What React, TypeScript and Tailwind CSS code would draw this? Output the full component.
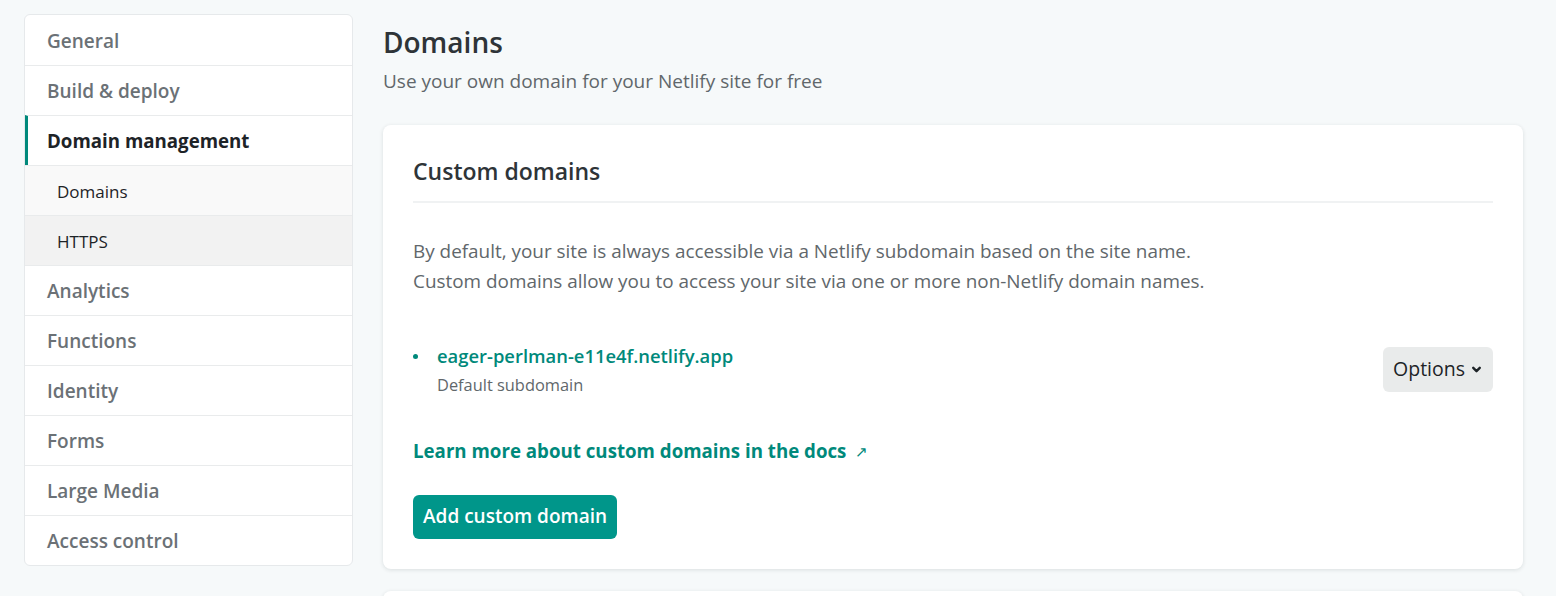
import { ChevronDown } from "lucide-react";

const navItems = [
  { label: "General" },
  { label: "Build & deploy" },
  { label: "Domain management", active: true },
  { label: "Domains", sub: true },
  { label: "HTTPS", sub: true, hover: true },
  { label: "Analytics" },
  { label: "Functions" },
  { label: "Identity" },
  { label: "Forms" },
  { label: "Large Media" },
  { label: "Access control" },
];

function Sidebar() {
  return (
    <nav className="w-[329px] shrink-0 self-start bg-white border border-[#e6e9eb] rounded-md overflow-hidden">
      {navItems.map((item, idx) => (
        <div
          key={item.label}
          className={[
            "h-[50px] flex items-center pt-[2px]",
            idx > 0 ? "border-t border-[#e9ebec]" : "",
            item.sub
              ? item.hover
                ? "bg-[#f2f2f2] pl-[32px] text-[17px] text-[#1d2327]"
                : "bg-[#f9f9f9] pl-[32px] text-[17px] text-[#1d2327]"
              : item.active
              ? "border-l-[3px] border-l-[#00897b] pl-[19px] text-[18.7px] font-bold text-[#1d2327]"
              : "pl-[22px] text-[19px] font-semibold text-[#6b7176]",
          ].join(" ")}
        >
          {item.label}
        </div>
      ))}
    </nav>
  );
}

function CustomDomains() {
  return (
    <section className="bg-white rounded-lg shadow-[0_1px_4px_rgba(14,30,37,0.12)] px-[30px] pt-[30px] pb-[30px]">
      <h2 className="text-[23px] leading-[32px] font-semibold text-[#2e3438] pb-[14px] border-b-2 border-[#f0f2f3]">
        Custom domains
      </h2>
      <p className="mt-[33px] text-[18.9px] leading-[30px] text-[#61676b]">
        By default, your site is always accessible via a Netlify subdomain based on the site name.
        <br />
        Custom domains allow you to access your site via one or more non-Netlify domain names.
      </p>
      <div className="mt-[46px] flex items-start justify-between">
        <div className="flex items-start gap-[19px]">
          <span className="mt-[12px] w-[5px] h-[5px] rounded-full bg-[#00897b]" />
          <div>
            <a className="block text-[18.4px] leading-[28px] font-semibold text-[#00897b]">
              eager-perlman-e11e4f.netlify.app
            </a>
            <div className="text-[16.4px] leading-[30px] text-[#61676b]">Default subdomain</div>
          </div>
        </div>
        <button className="mt-[5px] h-[45px] px-[10px] rounded-md bg-[#e9ebeb] flex items-center gap-[5px] text-[19.5px] text-[#1d2327]">
          Options
          <ChevronDown className="w-[13px] h-[13px]" strokeWidth={4.5} />
        </button>
      </div>
      <a className="mt-[37px] flex items-center gap-[9px] text-[18.7px] leading-[28px] font-bold text-[#00897b]">
        Learn more about custom domains in the docs
        <span className="text-[15px] font-normal">↗</span>
      </a>
      <button className="mt-[30px] h-[44px] px-[10px] rounded-md bg-[#00968a] text-white text-[19px] font-semibold">
        Add custom domain
      </button>
    </section>
  );
}

export default function App() {
  return (
    <div className="h-screen overflow-hidden bg-[#f6f9fa] font-['Open_Sans',sans-serif] flex gap-[30px] pl-[24px] pr-[33px] pt-[14px]">
      <Sidebar />
      <main className="flex-1 pt-[10px]">
        <h1 className="text-[28px] font-semibold text-[#2e3438] leading-[36px]">Domains</h1>
        <p className="mt-[7px] text-[19px] text-[#61676b]">Use your own domain for your Netlify site for free</p>
        <div className="mt-[29px]">
          <CustomDomains />
        </div>
        <div className="mt-[22px] h-[40px] bg-white rounded-lg shadow-[0_1px_4px_rgba(14,30,37,0.12)]" />
      </main>
    </div>
  );
}
